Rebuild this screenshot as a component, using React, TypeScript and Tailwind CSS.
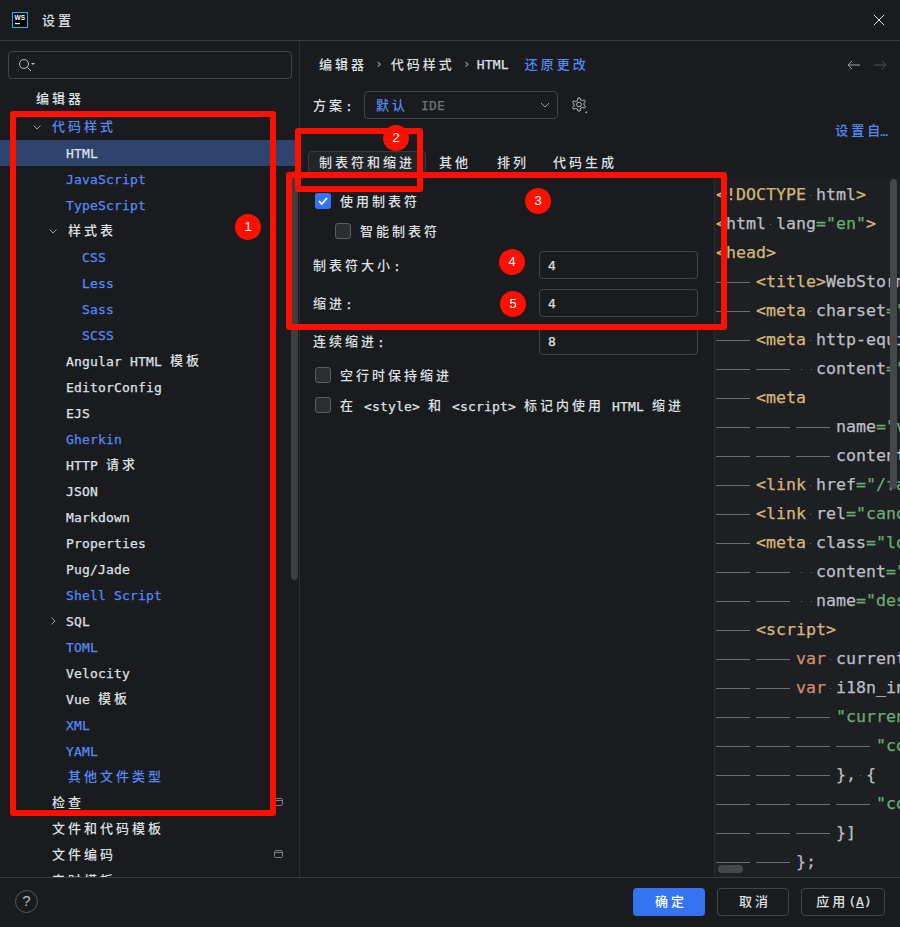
import React from "react";

const mono = "font-['DejaVu_Sans_Mono','Noto_Sans_CJK_SC',monospace]";

function T({ s, className = "" }: { s: string; className?: string }) {
  const parts = s.split(/([\u4e00-\u9fff]+)/).filter(Boolean);
  return (
    <span className={className}>
      {parts.map((p, i) =>
        /[\u4e00-\u9fff]/.test(p) ? (
          <span key={i} className="font-['Noto_Sans_CJK_SC'] text-[13px] font-medium tracking-[3px]">{p}</span>
        ) : (
          <span key={i} className="relative top-[1px] whitespace-pre tracking-[0.17px] [-webkit-text-stroke:0.25px]">{p}</span>
        )
      )}
    </span>
  );
}

type Row = { t: string; pad: string; blue?: boolean; sel?: boolean; arrow?: "d" | "r"; box?: boolean; first?: boolean };
const rows: Row[] = [
  { t: "编辑器", pad: "pl-[36px]", first: true },
  { t: "代码样式", pad: "pl-[52px]", blue: true, arrow: "d" },
  { t: "HTML", pad: "pl-[66px]", sel: true },
  { t: "JavaScript", pad: "pl-[66px]", blue: true },
  { t: "TypeScript", pad: "pl-[66px]", blue: true },
  { t: "样式表", pad: "pl-[68px]", arrow: "d" },
  { t: "CSS", pad: "pl-[82px]", blue: true },
  { t: "Less", pad: "pl-[82px]", blue: true },
  { t: "Sass", pad: "pl-[82px]", blue: true },
  { t: "SCSS", pad: "pl-[82px]", blue: true },
  { t: "Angular HTML 模板", pad: "pl-[66px]" },
  { t: "EditorConfig", pad: "pl-[66px]" },
  { t: "EJS", pad: "pl-[66px]" },
  { t: "Gherkin", pad: "pl-[66px]", blue: true },
  { t: "HTTP 请求", pad: "pl-[66px]" },
  { t: "JSON", pad: "pl-[66px]" },
  { t: "Markdown", pad: "pl-[66px]" },
  { t: "Properties", pad: "pl-[66px]" },
  { t: "Pug/Jade", pad: "pl-[66px]" },
  { t: "Shell Script", pad: "pl-[66px]", blue: true },
  { t: "SQL", pad: "pl-[66px]", arrow: "r" },
  { t: "TOML", pad: "pl-[66px]", blue: true },
  { t: "Velocity", pad: "pl-[66px]" },
  { t: "Vue 模板", pad: "pl-[66px]" },
  { t: "XML", pad: "pl-[66px]", blue: true },
  { t: "YAML", pad: "pl-[66px]", blue: true },
  { t: "其他文件类型", pad: "pl-[68px]", blue: true },
  { t: "检查", pad: "pl-[52px]", box: true },
  { t: "文件和代码模板", pad: "pl-[52px]" },
  { t: "文件编码", pad: "pl-[52px]", box: true },
  { t: "实时模板", pad: "pl-[52px]" },
];

function Chevron({ dir, x }: { dir: "d" | "r"; x: string }) {
  return (
    <svg width="10" height="10" viewBox="0 0 10 10" fill="none" stroke="#9da0a8" strokeWidth="1" className={`absolute top-[8px] ${x}`}>
      {dir === "d" ? <path d="M1.5 3.5 5 7l3.5-3.5" /> : <path d="M3.5 1.5 7 5 3.5 8.5" />}
    </svg>
  );
}

function Tree() {
  return (
    <div>
      {rows.map((r) => {
        const cjk = /[\u4e00-\u9fff]/.test(r.t);
        return (
          <div
            key={r.t}
            className={`relative flex items-center ${r.first ? "h-[28px] pb-[4px]" : cjk ? "h-[26px] pb-[2px]" : "h-[26px]"} ${r.pad} ${r.sel ? "bg-[#2e436e] text-[#dfe1e5]" : r.blue ? "text-[#548af7]" : "text-[#dfe1e5]"}`}
          >
            {r.arrow && <Chevron dir={r.arrow} x={r.t === "代码样式" ? "left-[32px]" : "left-[48px]"} />}
            <T s={r.t} />
            {r.box && (
              <svg width="10" height="9" viewBox="0 0 10 9" fill="none" stroke="#7c7f87" className="absolute left-[274px] top-[8px]">
                <rect x="0.5" y="0.5" width="8" height="7" rx="1.2" />
                <path d="M0.5 2.5h8" />
              </svg>
            )}
          </div>
        );
      })}
    </div>
  );
}

function Check({ on, className = "" }: { on?: boolean; className?: string }) {
  return on ? (
    <span className={`flex h-4 w-4 items-center justify-center rounded-[3px] bg-[#3574f0] ${className}`}>
      <svg width="12" height="12" viewBox="0 0 12 12" fill="none" stroke="#fff" strokeWidth="1.8"><path d="M2 6.2 4.8 9 10 3" /></svg>
    </span>
  ) : (
    <span className={`h-4 w-4 rounded-[3px] border border-[#5a5d63] bg-[#2b2d30] ${className}`} />
  );
}

function Num({ v }: { v: string }) {
  return (
    <div className="flex h-[28px] w-[159px] items-center rounded-[4px] border border-[#43454a] pl-[8px] text-[#dfe1e5]">
      <T s={v} />
    </div>
  );
}

const Y = "#d5b778", B = "#bcbec4", S = "#6aab73", O = "#cf8e6d";
type Seg = [string, string];
type Line = { tabs: number; sp?: number; segs: Seg[] };
const D: Seg = [" ", "#555"];
const code: Line[] = [
  { tabs: 0, segs: [["<!DOCTYPE", Y], D, ["html", B], [">", Y]] },
  { tabs: 0, segs: [["<", Y], ["html", B], D, ["lang", B], ["=", S], ['"en"', S], [">", Y]] },
  { tabs: 0, segs: [["<head>", Y]] },
  { tabs: 1, segs: [["<title>", Y], ["WebStorm Help", B]] },
  { tabs: 1, segs: [["<meta", Y], D, ["charset", B], ["=", S], ['"UTF-8"', S]] },
  { tabs: 1, segs: [["<meta", Y], D, ["http-equiv", B], ["=", S], ['"X"', S]] },
  { tabs: 2, sp: 2, segs: [["content", B], ["=", S], ['"IE=edge"', S]] },
  { tabs: 1, segs: [["<meta", Y]] },
  { tabs: 3, segs: [["name", B], ["=", S], ['"viewport"', S]] },
  { tabs: 3, segs: [["content", B], ["=", S], ['"width"', S]] },
  { tabs: 1, segs: [["<link", Y], D, ["href", B], ["=", S], ['"/favicon"', S]] },
  { tabs: 1, segs: [["<link", Y], D, ["rel", B], ["=", S], ['"canonical"', S]] },
  { tabs: 1, segs: [["<meta", Y], D, ["class", B], ["=", S], ['"local"', S]] },
  { tabs: 2, sp: 2, segs: [["content", B], ["=", S], ['"text"', S]] },
  { tabs: 2, sp: 2, segs: [["name", B], ["=", S], ['"description"', S]] },
  { tabs: 1, segs: [["<script>", Y]] },
  { tabs: 2, segs: [["var", O], D, ["currentPage", B]] },
  { tabs: 2, segs: [["var", O], D, ["i18n_index", B]] },
  { tabs: 3, segs: [['"current"', S]] },
  { tabs: 4, segs: [['"code"', S]] },
  { tabs: 3, segs: [["},", B], D, ["{", B]] },
  { tabs: 4, segs: [['"code"', S]] },
  { tabs: 3, segs: [["}]", B]] },
  { tabs: 2, segs: [["};", B]] },
];

function Dot() {
  return (
    <span className="flex w-[10px] shrink-0 justify-center"><span className="h-px w-px bg-[#6a6d73]" /></span>
  );
}

function Editor() {
  return (
    <div className={`relative flex-1 overflow-hidden border-l border-[#2b2d30] bg-[#1e1f22] pl-[1px] pt-[4px] ${mono} text-[16.6px] [-webkit-text-stroke:0.25px]`}>
      {code.map((l, i) => (
        <div key={i} className="flex h-[29px] items-center whitespace-pre">
          {Array.from({ length: l.tabs }).map((_, k) => (
            <span key={k} className="flex w-[40px] shrink-0"><span className="h-px w-[34px] bg-[#6a6d73]" /></span>
          ))}
          {l.sp ? (<><Dot /><Dot /></>) : null}
          {l.segs.map(([t, c], k) =>
            t === " " ? <Dot key={k} /> : <span key={k} style={{ color: c }}>{t}</span>
          )}
        </div>
      ))}
      <div className="absolute left-[175px] top-[2px] h-[310px] w-[7px] rounded-full bg-[#45474b]" />
      <div className="absolute bottom-[4px] left-[3px] h-[8px] w-[25px] rounded-full bg-[#45474b]" />
    </div>
  );
}

function Box({ c }: { c: string }) {
  return <div className={`pointer-events-none absolute rounded-[3px] border-[6px] border-[#fe1000] ${c}`} />;
}
function Badge({ n, c }: { n: string; c: string }) {
  return (
    <div className={`absolute flex h-[26px] w-[26px] items-center justify-center rounded-full bg-[#fe1000] font-['Liberation_Sans',sans-serif] text-[13px] text-white ${c}`}>{n}</div>
  );
}

export default function App() {
  return (
    <div className={`relative flex h-[927px] w-[900px] flex-col overflow-hidden bg-[#1a1b1e] text-[13px] text-[#dfe1e5] ${mono}`}>
      {/* title bar */}
      <div className="flex h-[41px] shrink-0 items-center border-b border-[#393b40] pl-[12px] pr-[15px]">
        <svg width="16" height="16" viewBox="0 0 16 16" className="mr-[14px]">
          <rect x="0.5" y="0.5" width="15" height="15" fill="#000" stroke="#07c3f2" />
          <rect x="3" y="11" width="5" height="1.2" fill="#fff" />
          <text x="2.6" y="8" fontSize="6.5" fontWeight="700" fill="#fff" fontFamily="Liberation Sans">WS</text>
        </svg>
        <T s="设置" />
        <svg width="12" height="12" viewBox="0 0 12 12" stroke="#dfe1e5" className="ml-auto"><path d="M.8.8l10.4 10.4M11.2.8.8 11.2" /></svg>
      </div>

      <div className="flex min-h-0 flex-1">
        {/* sidebar */}
        <div className="relative w-[300px] shrink-0 overflow-hidden border-r border-[#2b2d30]">
          <div className="mx-[8px] mt-[10px] flex h-[28px] w-[284px] items-center rounded-[4px] border border-[#43454a] pl-[9px]">
            <svg width="18" height="14" viewBox="0 0 18 14" fill="none" stroke="#bcbec4">
              <circle cx="6" cy="6" r="4.5" /><path d="M9.5 9.5 13 13" /><path d="M13 5h4l-2 2z" fill="#bcbec4" stroke="none" />
            </svg>
          </div>
          <div className="mt-[7px]"><Tree /></div>
          <div className="absolute left-[291px] top-[130px] h-[409px] w-[7px] rounded-full bg-[#3c3e42]" />
        </div>

        {/* main */}
        <div className="flex min-w-0 flex-1 flex-col">
          <div className="flex h-[46px] shrink-0 items-center pl-[19px] pr-[9px]">
            <T s="编辑器" />
            <span className="mx-[8px] text-[#a0a3aa]">›</span>
            <T s="代码样式" />
            <span className="ml-[8px] mr-[6px] text-[#a0a3aa]">›</span>
            <T s="HTML" />
            <T s="还原更改" className="ml-[16px] text-[#548af7]" />
            <div className="relative top-[1px] ml-auto flex gap-[6px]">
              <svg width="20" height="14" viewBox="0 0 20 14" fill="none" stroke="#9da0a8"><path d="M3 7h12M7 3 3 7l4 4" /></svg>
              <svg width="20" height="14" viewBox="0 0 20 14" fill="none" stroke="#4e5157"><path d="M3 7h12M11 3l4 4-4 4" /></svg>
            </div>
          </div>
          <div className="mt-[4px] flex h-[28px] shrink-0 items-center pl-[13px]">
            <T s="方案:" className="mr-[11px]" />
            <div className="flex h-[28px] w-[194px] items-center rounded-[4px] border border-[#43454a] pl-[11px]">
              <T s="默认" className="text-[#548af7]" />
              <T s="IDE" className="ml-[13px] text-[#6f737a]" />
              <svg width="10" height="10" viewBox="0 0 10 10" fill="none" stroke="#9da0a8" className="ml-auto mr-[7px]"><path d="M1 3l4 4 4-4" /></svg>
            </div>
            <svg width="18" height="18" viewBox="0 0 18 18" fill="none" stroke="#bcbec4" className="ml-[12px]">
              <path d="M8 2h2l.6 1.9 1.9.8 1.8-.9 1.1 1.7-1.4 1.4v2.2l1.4 1.4-1.1 1.7-1.8-.9-1.9.8L10 15H8l-.6-1.9-1.9-.8-1.8.9-1.1-1.7L4 10.1V7.900L2.600 6.500l1.100-1.700 1.800.9 1.900-.8z" />
              <circle cx="9" cy="8.500" r="2.300" />
              <path d="M17 15v2h-2z" fill="#bcbec4" stroke="none" />
            </svg>
          </div>
          <div className="mt-[3px] flex h-[16px] shrink-0 items-center justify-end pr-[12px] text-[#548af7]">
            <span className="font-['Noto_Sans_CJK_SC'] font-medium">
              <span className="tracking-[3px]">设置</span>自
            </span>
            <span className="relative top-[2px] font-['DejaVu_Sans_Mono'] text-[13px]">…</span>
          </div>
          <div className="mt-[13px] flex h-[26px] shrink-0 items-start pl-[8px]">
            <div className="flex h-[24px] items-center rounded-[4px] border border-[#393b40] bg-[#232427] px-[10px] pb-[1px]"><T s="制表符和缩进" /></div>
            <div className="ml-[13px] flex h-[24px] items-center pb-[1px]"><T s="其他" /></div>
            <div className="ml-[26px] flex h-[24px] items-center pb-[1px]"><T s="排列" /></div>
            <div className="ml-[24px] flex h-[24px] items-center pb-[1px]"><T s="代码生成" /></div>
          </div>
          <div className="flex min-h-0 flex-1">
            {/* options */}
            <div className="flex w-[414px] shrink-0 flex-col pl-[13px]">
              <div className="mt-[16px] flex h-[16px] items-center gap-[9px] pl-[2px]"><Check on /><T s="使用制表符" /></div>
              <div className="mt-[14px] flex h-[16px] items-center gap-[9px] pl-[22px]"><Check /><T s="智能制表符" /></div>
              <div className="mt-[12px] flex h-[28px] items-center justify-between pr-[16px]"><T s="制表符大小:" /><Num v="4" /></div>
              <div className="mt-[10px] flex h-[28px] items-center justify-between pr-[16px]"><T s="缩进:" /><Num v="4" /></div>
              <div className="mt-[10px] flex h-[28px] items-center justify-between pr-[16px]"><T s="连续缩进:" /><Num v="8" /></div>
              <div className="mt-[12px] flex h-[16px] items-center gap-[9px] pl-[2px]"><Check /><T s="空行时保持缩进" /></div>
              <div className="mt-[14px] flex h-[16px] items-center gap-[9px] pl-[2px]"><Check /><T s="在 <style> 和 <script> 标记内使用 HTML 缩进" /></div>
            </div>
            <Editor />
          </div>
        </div>
      </div>

      {/* footer */}
      <div className="flex h-[50px] shrink-0 items-center border-t border-[#393b40] bg-[#1a1b1e] pb-[2px] pl-[15px] pr-[15px]">
        <div className="flex h-[23px] w-[23px] items-center justify-center rounded-full border border-[#55585e] font-['Liberation_Sans',sans-serif] text-[15px] text-[#bcbec4]">?</div>
        <div className="ml-auto flex h-[28px] w-[72px] items-center justify-center rounded-[4px] bg-[#3574f0] pl-[4px] text-white"><T s="确定" /></div>
        <div className="ml-[12px] flex h-[28px] w-[72px] items-center justify-center rounded-[4px] border border-[#43454a] pl-[4px]"><T s="取消" /></div>
        <div className="ml-[12px] flex h-[28px] w-[84px] items-center justify-center rounded-[4px] border border-[#43454a] pl-[2px]"><T s="应用" /><span className="[-webkit-text-stroke:0.25px]">(<span className="underline">A</span>)</span></div>
      </div>

      {/* annotations */}
      <Box c="left-[10px] top-[111px] h-[705px] w-[266px]" />
      <Box c="left-[295px] top-[128px] h-[64px] w-[128px]" />
      <Box c="left-[286px] top-[172px] h-[158px] w-[441px]" />
      <Badge n="1" c="left-[235px] top-[214px]" />
      <Badge n="2" c="left-[383px] top-[125px]" />
      <Badge n="3" c="left-[525px] top-[188px]" />
      <Badge n="4" c="left-[499px] top-[249px]" />
      <Badge n="5" c="left-[500px] top-[291px]" />
    </div>
  );
}
